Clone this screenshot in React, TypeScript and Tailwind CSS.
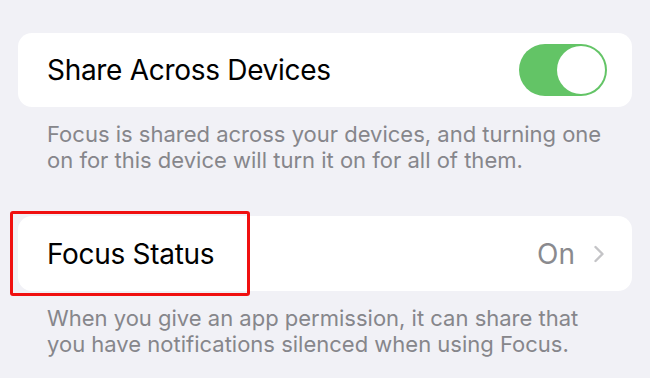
export default function App() {
  return (
    <div
      className="w-[650px] h-[378px] overflow-hidden bg-[#f1f1f6] pt-[33px] pl-[18px] pr-[18px]"
      style={{ fontFamily: "Inter, 'Noto Sans', sans-serif" }}
    >
      {/* Share Across Devices */}
      <div className="h-[74px] bg-white rounded-[14px] flex items-center justify-between pl-[29px] pr-[25px]">
        <span className="text-[28px] text-black tracking-[-0.3px]">Share Across Devices</span>
        <div className="w-[88px] h-[52px] rounded-full bg-[#63c466] flex items-center justify-end p-[2px]">
          <div className="w-[48px] h-[48px] rounded-full bg-white" />
        </div>
      </div>
      <p className="mt-[14px] pl-[29px] pr-[22px] text-[22px] leading-[26px] text-[#86868b]">
        Focus is shared across your devices, and turning one on for this device will turn it on for all of them.
      </p>

      {/* Focus Status */}
      <div className="relative mt-[43px] h-[75px] bg-white rounded-[14px] flex items-center justify-between pl-[29px] pr-[27px]">
        <span className="text-[28px] text-black tracking-[-0.3px]">Focus Status</span>
        <div className="flex items-center gap-[18px]">
          <span className="text-[28px] text-[#8a8a8e]">On</span>
          <svg width="12" height="18" viewBox="0 0 12 18" fill="none" className="text-[#c4c4c7]">
            <path d="M2.5 2 L9.5 9 L2.5 16" stroke="currentColor" strokeWidth="2.4" strokeLinecap="round" strokeLinejoin="round" />
          </svg>
        </div>
        <div className="absolute left-[-8px] top-[-5px] w-[240px] h-[85px] border-[3px] border-[#f01010] rounded-[3px]" />
      </div>
      <p className="mt-[14px] pl-[29px] pr-[22px] text-[22px] leading-[26px] text-[#86868b]">
        When you give an app permission, it can share that you have notifications silenced when using Focus.
      </p>
    </div>
  );
}
